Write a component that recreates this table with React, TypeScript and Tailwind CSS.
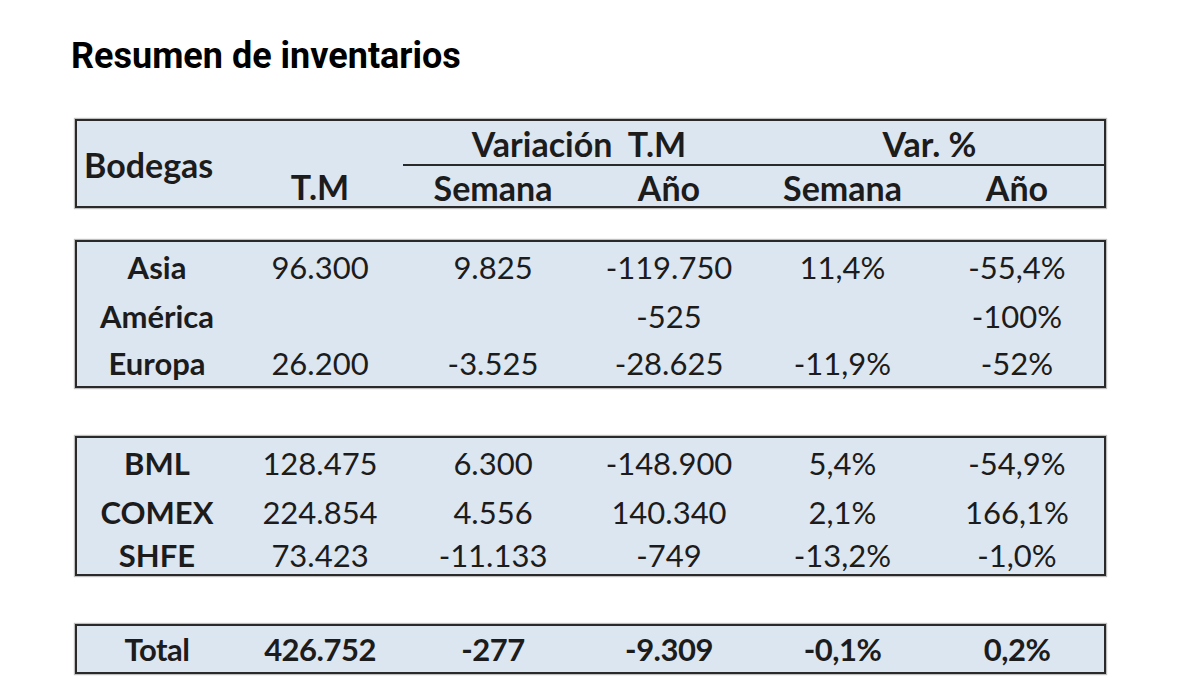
// Resumen de inventarios - tabla de bodegas
const cols = 'grid grid-cols-[160px_166px_180px_172px_175px_174px]';
const box = 'w-[1031px] border-2 border-[#2a2a2a] bg-[#dce6f1] shadow-[0_0_1px_1px_rgba(0,0,0,0.25)]';
const cell = 'flex items-center justify-center';

type Row = { name: string; values: string[]; h: string };

const regions: Row[] = [
  { name: 'Asia', values: ['96.300', '9.825', '-119.750', '11,4%', '-55,4%'], h: 'h-[50px]' },
  { name: 'América', values: ['', '', '-525', '', '-100%'], h: 'h-[49px]' },
  { name: 'Europa', values: ['26.200', '-3.525', '-28.625', '-11,9%', '-52%'], h: 'h-[45px]' },
];

const exchanges: Row[] = [
  { name: 'BML', values: ['128.475', '6.300', '-148.900', '5,4%', '-54,9%'], h: 'h-[50px]' },
  { name: 'COMEX', values: ['224.854', '4.556', '140.340', '2,1%', '166,1%'], h: 'h-[48px]' },
  { name: 'SHFE', values: ['73.423', '-11.133', '-749', '-13,2%', '-1,0%'], h: 'h-[38px]' },
];

function DataRow({ row }: { row: Row }) {
  return (
    <div className={`${cols} ${row.h}`}>
      <div className={`${cell} font-bold`}>{row.name}</div>
      {row.values.map((v, i) => (
        <div key={i} className={cell}>{v}</div>
      ))}
    </div>
  );
}

export default function App() {
  return (
    <div className="min-h-[700px] bg-white pt-[35px] pl-[71px]" style={{ fontFamily: 'Roboto, sans-serif' }}>
      <h1 className="text-[36px] leading-[42px] font-bold text-black">Resumen de inventarios</h1>

      <div
        className="ml-[4px] mt-[42px] flex flex-col text-[31px] leading-none text-[#1c1c1c]"
        style={{ fontFamily: 'Lato, "Open Sans", sans-serif' }}
      >
        {/* encabezado */}
        <div className={box}>
          <div className={`${cols} grid-rows-[45px_40px] text-[34px] font-bold`}>
            <div className="row-span-2 flex items-center pl-[7px] pt-[2px]">Bodegas</div>
            <div className="row-span-2 flex items-end justify-center pb-[2px]">T.M</div>
            <div className="col-span-2 flex items-center justify-center border-b-2 border-[#2a2a2a] pt-[3px]">
              Variación&nbsp; T.M
            </div>
            <div className="col-span-2 flex items-center justify-center border-b-2 border-[#2a2a2a] pt-[3px]">
              Var. %
            </div>
            <div className={`${cell} pt-[3px]`}>Semana</div>
            <div className={`${cell} pt-[3px]`}>Año</div>
            <div className={`${cell} pt-[3px]`}>Semana</div>
            <div className={`${cell} pt-[3px]`}>Año</div>
          </div>
        </div>

        <div className={`${box} mt-[32px]`}>
          {regions.map((r) => (
            <DataRow key={r.name} row={r} />
          ))}
        </div>

        <div className={`${box} mt-[48px]`}>
          {exchanges.map((r) => (
            <DataRow key={r.name} row={r} />
          ))}
        </div>

        <div className={`${box} mt-[48px]`}>
          <div className={`${cols} h-[46px] font-bold tracking-[-0.5px]`}>
            <div className={cell}>Total</div>
            <div className={cell}>426.752</div>
            <div className={cell}>-277</div>
            <div className={cell}>-9.309</div>
            <div className={cell}>-0,1%</div>
            <div className={cell}>0,2%</div>
          </div>
        </div>
      </div>
    </div>
  );
}
